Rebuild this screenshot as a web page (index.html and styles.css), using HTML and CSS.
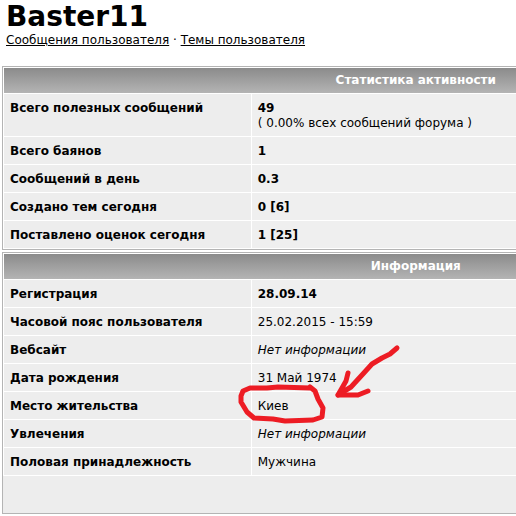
FILE: index.html
```html
<!DOCTYPE html>
<html lang="ru">
<head>
	<meta charset="utf-8">
	<meta name="viewport" content="width=device-width, initial-scale=1">
	<title>Baster11</title>
	<link rel="stylesheet" href="styles.css">
</head>
<body>
	<div class="profile">
		<h1>Baster11</h1>
		<div class="links"><a href="#posts">Сообщения пользователя</a> · <a href="#topics">Темы пользователя</a></div>
	</div>
	<table class="info">
		<colgroup><col class="names"><col></colgroup>
		<tr><th class="title" colspan="2">Статистика активности</th></tr>
		<tr><th class="name">Всего полезных сообщений</th><td><b>49</b><br>( 0.00% всех сообщений форума )</td></tr>
		<tr><th class="name">Всего баянов</th><td><b>1</b></td></tr>
		<tr><th class="name">Сообщений в день</th><td><b>0.3</b></td></tr>
		<tr><th class="name">Создано тем сегодня</th><td><b>0 [6]</b></td></tr>
		<tr><th class="name">Поставлено оценок сегодня</th><td><b>1 [25]</b></td></tr>
	</table>
	<div class="last">
		<table class="info">
			<colgroup><col class="names"><col></colgroup>
			<tr><th class="title" colspan="2">Информация</th></tr>
			<tr><th class="name">Регистрация</th><td><b>28.09.14</b></td></tr>
			<tr><th class="name">Часовой пояс пользователя</th><td>25.02.2015 - 15:59</td></tr>
			<tr><th class="name">Вебсайт</th><td><i>Нет информации</i></td></tr>
			<tr><th class="name">Дата рождения</th><td>31 Май 1974</td></tr>
			<tr>
				<th class="name">Место жительства</th>
				<td class="marked">Киев
					<svg class="mark" width="168" height="84" viewBox="0 0 168 84" aria-hidden="true">
						<path d="M74 45 L42 44 L31 45 L14 45 L7 48 L5 53 L5 59 L11 69 L18 75 L37 76 L49 78 L77 77 L86 74 L87 65 L82 56 L79 48 L74 44"/>
						<path d="M161 5 L154 11 L146 15 L136 21 L126 32 L115 44 L102 52 L110 38 L112 30"/>
						<path d="M102 52 L122 52 L132 48"/>
					</svg>
				</td>
			</tr>
			<tr><th class="name">Увлечения</th><td><i>Нет информации</i></td></tr>
			<tr><th class="name">Половая принадлежность</th><td>Мужчина</td></tr>
		</table>
		<div class="footer"></div>
	</div>
</body>
</html>
```
FILE: styles.css
```css
html
{
	overflow: hidden;
}
body
{
	margin: 0 0 0 2px;
	background-color: #FFFFFF;
	color: #000000;
	font: 12px/15px Verdana, "DejaVu Sans", sans-serif;
}
.profile
{
	padding: 0 4px 18px;
}
h1
{
	margin: 0;
	font-size: 28px;
	line-height: 33px;
}
a
{
	color: #000000;
	text-decoration: underline;
}
/* the forum tables are wider than the window */
.info
{
	width: 161%;
	table-layout: fixed;
	border: 1px solid #B4B4B4;
	border-spacing: 1px;
}
.names
{
	width: 30%;
}
.info td, .info th
{
	padding: 7px 6px 5px;
	vertical-align: top;
	text-align: left;
	background-color: #EFEFEF;
}
.info .name
{
	background-color: #EDEDED;
}
.info .title
{
	padding: 5px;
	text-align: center;
	color: #FFFFFF;
	background: linear-gradient(#8B8B8B, #B4B4B4);
}
.last
{
	width: 161%;
	margin-top: 2px;
}
.last .info
{
	width: 100%;
	border-bottom: 0;
}
.footer
{
	height: 37px;
	border: 1px solid #B4B4B4;
	border-top: 0;
	background-color: #EDEDED;
}
.info .marked
{
	position: relative;
}
.mark
{
	position: absolute;
	left: -16px;
	top: -49px;
	fill: none;
	stroke: #ED1C24;
	stroke-width: 5;
	stroke-linecap: round;
	stroke-linejoin: round;
}
```
